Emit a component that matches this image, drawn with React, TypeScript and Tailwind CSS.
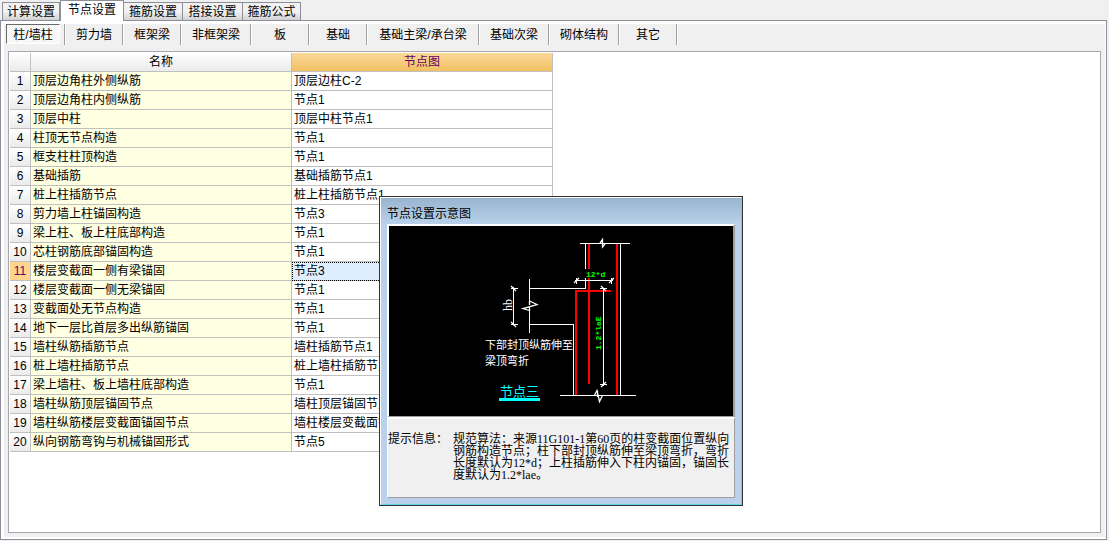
import { useState } from "react";

const topTabs = [
  { label: "计算设置", width: "w-[58px]" },
  { label: "节点设置", width: "w-[64px]" },
  { label: "箍筋设置", width: "w-[59px]" },
  { label: "搭接设置", width: "w-[60px]" },
  { label: "箍筋公式", width: "w-[58px]" },
];

const categories = [
  { label: "剪力墙", width: "w-[58px]" },
  { label: "框架梁", width: "w-[58px]" },
  { label: "非框架梁", width: "w-[70px]" },
  { label: "板", width: "w-[58px]" },
  { label: "基础", width: "w-[58px]" },
  { label: "基础主梁/承台梁", width: "w-[112px]" },
  { label: "基础次梁", width: "w-[70px]" },
  { label: "砌体结构", width: "w-[70px]" },
  { label: "其它", width: "w-[58px]" },
];

const rows: [string, string][] = [
  ["顶层边角柱外侧纵筋", "顶层边柱C-2"],
  ["顶层边角柱内侧纵筋", "节点1"],
  ["顶层中柱", "顶层中柱节点1"],
  ["柱顶无节点构造", "节点1"],
  ["框支柱柱顶构造", "节点1"],
  ["基础插筋", "基础插筋节点1"],
  ["桩上柱插筋节点", "桩上柱插筋节点1"],
  ["剪力墙上柱锚固构造", "节点3"],
  ["梁上柱、板上柱底部构造", "节点1"],
  ["芯柱钢筋底部锚固构造", "节点1"],
  ["楼层变截面一侧有梁锚固", "节点3"],
  ["楼层变截面一侧无梁锚固", "节点1"],
  ["变截面处无节点构造", "节点1"],
  ["地下一层比首层多出纵筋锚固", "节点1"],
  ["墙柱纵筋插筋节点", "墙柱插筋节点1"],
  ["桩上墙柱插筋节点", "桩上墙柱插筋节点1"],
  ["梁上墙柱、板上墙柱底部构造", "节点1"],
  ["墙柱纵筋顶层锚固节点", "墙柱顶层锚固节点1"],
  ["墙柱纵筋楼层变截面锚固节点", "墙柱楼层变截面锚固节点1"],
  ["纵向钢筋弯钩与机械锚固形式", "节点5"],
];

function NodeDiagram() {
  return (
    <svg
      className="block h-[190px] w-full bg-black font-['Liberation_Serif','Noto_Sans_CJK_SC',serif]"
      viewBox="389 226 344 190"
      role="img"
      aria-label="节点三"
    >
      <g fill="none" stroke="#ff0000" strokeWidth="2" shapeRendering="crispEdges">
        <path d="M589 243V269M589 278V384M617 244V395M611 291H576V395" />
      </g>
      <g fill="none" stroke="#ffffff" strokeWidth="1" shapeRendering="crispEdges">
        <path d="M580 243.5H630M585.5 244V269M585.5 278V288.5H529M620.5 244V395M529 324.5H573.5V395M560 395.5H636" />
        <path d="M529.5 279V302M529.5 310V333M513.5 287V325M575 280.5H613M603.5 288V386" />
        <path d="M511 288.5H518M511 324.5H518M576.5 278V284M611.5 278V284M600 288.5H607M600 384.5H607" />
      </g>
      <g fill="none" stroke="#ffffff" strokeWidth="1.3">
        <path d="M529.5 301L537 304.5L523 308.5L529.5 310.5M529.5 301V305M529.5 307V311" />
        <path d="M600 243L602.5 239.5V247L605 244M602.5 240V246" />
        <path d="M594 396L597 390.5L599.5 401.5L602.5 395.5M597.5 391V397" />
        <path d="M511 286L516 291M511 322L516 327M574 283L579 278M609 283L614 278M601 286L606 291M601 387L606 382" />
      </g>
      <g
        fill="#00ff00"
        fontSize="8"
        fontWeight="700"
        className="font-['Liberation_Mono',monospace]"
      >
        <text x="586" y="277">12*d</text>
        <text transform="translate(601 350) rotate(-90)">1.2*laE</text>
      </g>
      <g fill="#ffffff" fontSize="11">
        <text transform="translate(512 311) rotate(-90)" fontSize="12">hb</text>
        <text x="485" y="349">下部封顶纵筋伸至</text>
        <text x="485" y="365">梁顶弯折</text>
      </g>
      <text x="500" y="396" fill="#00ffff" fontSize="13">节点三</text>
      <rect x="499" y="398" width="41" height="3" fill="#00ffff" />
    </svg>
  );
}

function PreviewWindow() {
  return (
    <section
      aria-label="节点设置示意图"
      className="absolute top-[196px] left-[379px] w-[364px] border border-[#333333] bg-[#b9d1ea]"
    >
      <div className="border border-t-white border-r-[#5cd8ee] border-b-[#5cd8ee] border-l-white px-[6px] pb-[6px]">
        <h2 className="-mx-[6px] h-[26px] bg-linear-to-b from-[#98b4d0] to-[#b9d1ea] px-[6px] text-xs leading-[32px]">
          节点设置示意图
        </h2>
        <div className="border-t-2 border-r-2 border-b border-l-2 border-t-white border-r-[#a0a0a0] border-b-[#a0a0a0] border-l-white">
          <NodeDiagram />
        </div>
        <div className="flex h-[81px] gap-3 border border-t-2 border-t-white border-r-[#a0a0a0] border-b-[#a0a0a0] border-l-white bg-[#f0f0f0] pt-[14px] font-['Liberation_Serif','Noto_Sans_CJK_SC',serif] text-xs leading-3 whitespace-nowrap">
          <span className="w-[53px]">提示信息：</span>
          <p>
            规范算法：来源11G101-1第60页的柱变截面位置纵向
            <br />
            钢筋构造节点；柱下部封顶纵筋伸至梁顶弯折，弯折
            <br />
            长度默认为12*d；上柱插筋伸入下柱内锚固，锚固长
            <br />
            度默认为1.2*lae。
          </p>
        </div>
      </div>
    </section>
  );
}

export default function App() {
  const [tab, setTab] = useState(1);
  const [selected, setSelected] = useState(10);

  return (
    <div className="relative flex min-h-screen flex-col bg-[#f0f0f0] pr-[2px] pb-px font-['Liberation_Sans','Noto_Sans_CJK_SC',sans-serif] text-xs text-black">
      <div role="tablist" className="z-10 -mb-px flex h-[21px] items-end pl-[2px]">
        {topTabs.map((t, i) => (
          <button
            key={t.label}
            type="button"
            role="tab"
            aria-selected={i === tab}
            onClick={() => setTab(i)}
            className={
              i === tab
                ? `${t.width} h-[21px] border-x border-t border-[#8c8e9a] bg-white pb-px leading-[19px] whitespace-nowrap`
                : `${t.width} h-[19px] border border-l-0 border-[#8c8e9a] bg-linear-to-b from-[#f2f2f2] from-50% to-[#d2d2d2] leading-[18px] whitespace-nowrap first:border-l`
            }
          >
            {t.label}
          </button>
        ))}
      </div>

      <main className="flex flex-1 flex-col border border-[#8c8e9a] bg-[#f0f0f0]">
        <div className="flex flex-1 flex-col border-t-3 border-r border-b-2 border-l-3 border-white pr-1 pb-1 pl-1">
          <nav className="-ml-[2px] flex h-[27px] items-start">
            <div className="flex h-[21px] w-[59px] items-start border-r border-[#a0a0a0] pr-1">
              <button
                type="button"
                aria-pressed="true"
                className="h-5 w-[54px] border border-t-[#696969] border-r-white border-b-white border-l-[#696969] bg-[repeating-conic-gradient(#ffffff_0_25%,#f0f0f0_0_50%)] bg-size-[2px_2px] pt-px leading-[18px] whitespace-nowrap"
              >
                柱/墙柱
              </button>
            </div>
            {categories.map((c) => (
              <button
                key={c.label}
                type="button"
                className={`${c.width} h-[21px] border-r border-l border-r-[#a0a0a0] border-l-white leading-5 whitespace-nowrap`}
              >
                {c.label}
              </button>
            ))}
            <span className="h-[21px] border-l border-white" />
          </nav>

          <div className="flex-1 border border-[#a6a8ae] bg-white p-px">
            <table className="w-[543px] table-fixed border-separate border-spacing-0">
              <colgroup>
                <col className="w-[21px]" />
                <col className="w-[261px]" />
                <col className="w-[261px]" />
              </colgroup>
              <thead>
                <tr className="h-[19px] leading-[18px]">
                  <th className="border-r border-b border-[#c0c0c0] bg-linear-to-b from-white to-[#ebebeb] p-0" />
                  <th className="border-r border-b border-[#c0c0c0] bg-linear-to-b from-white to-[#ebebeb] p-0 font-normal">
                    名称
                  </th>
                  <th className="border-r border-b border-[#c0c0c0] bg-linear-to-b from-[#f9d899] to-[#f1c160] p-0 font-normal text-[#660066]">
                    节点图
                  </th>
                </tr>
              </thead>
              <tbody>
                {rows.map(([name, node], i) => (
                  <tr key={name} className="h-[19px] leading-[18px]" onClick={() => setSelected(i)}>
                    <th
                      scope="row"
                      className={
                        i === selected
                          ? "border-r border-b border-[#c0c0c0] bg-[#ffd58d] p-0 font-normal text-[#660066]"
                          : "border-r border-b border-[#c0c0c0] bg-linear-to-b from-white to-[#ebebeb] p-0 font-normal"
                      }
                    >
                      {i + 1}
                    </th>
                    <td className="border-r border-b border-[#c0c0c0] bg-[#ffffe1] p-0 pl-[2px] whitespace-nowrap">{name}</td>
                    <td
                      className={
                        i === selected
                          ? "border-r border-b border-[#c0c0c0] bg-[#dfeeff] p-0 pl-[2px] whitespace-nowrap outline-1 -outline-offset-1 outline-black outline-dotted"
                          : "border-r border-b border-[#c0c0c0] bg-white p-0 pl-[2px] whitespace-nowrap"
                      }
                    >
                      {node}
                    </td>
                  </tr>
                ))}
              </tbody>
            </table>
          </div>
        </div>
      </main>

      <PreviewWindow />
    </div>
  );
}
